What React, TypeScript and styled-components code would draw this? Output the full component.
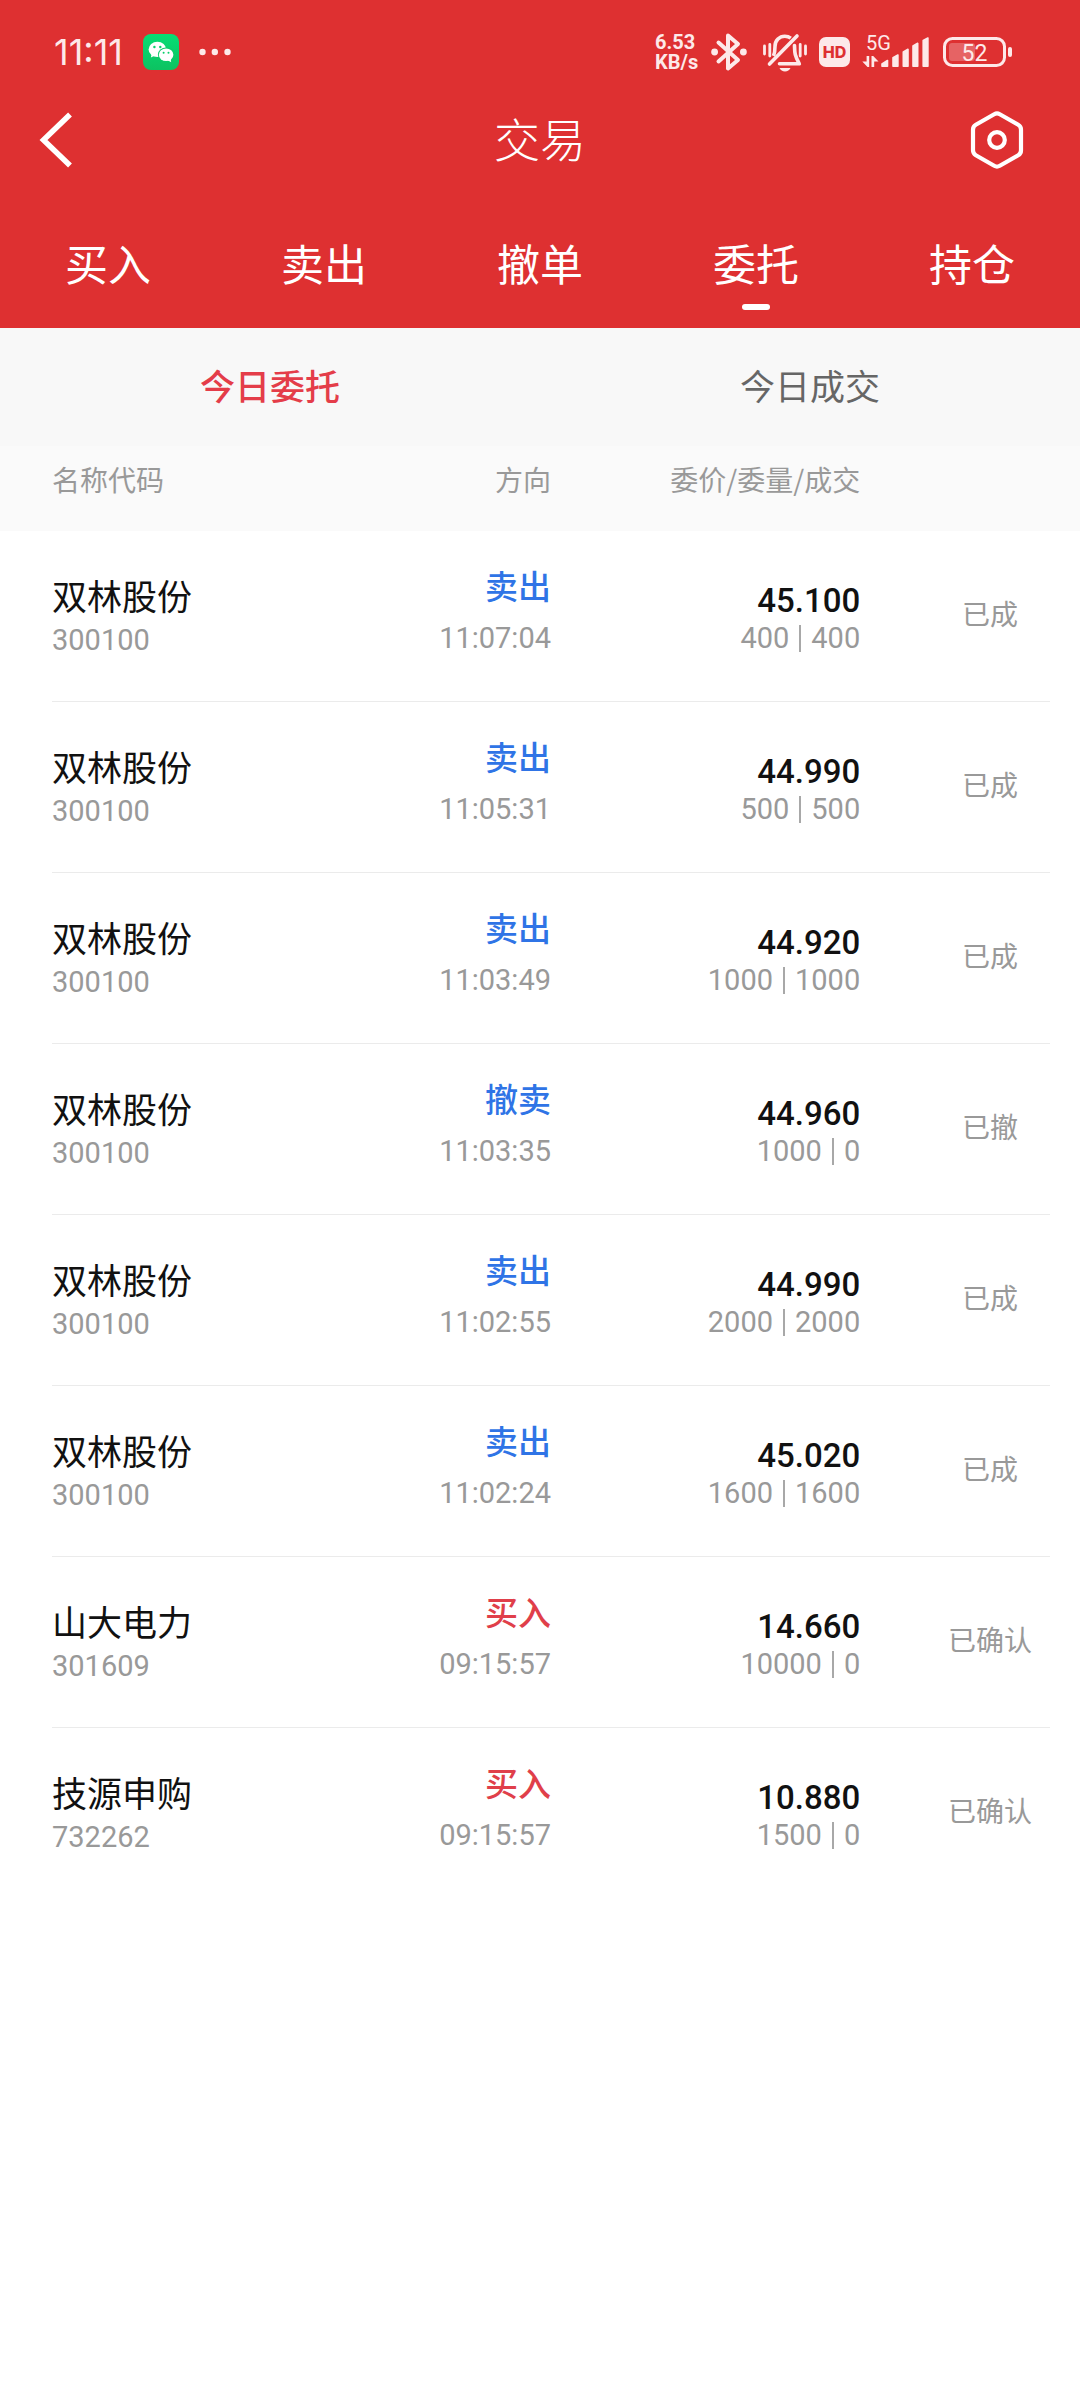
import React, { useState } from 'react';
import styled, { createGlobalStyle } from 'styled-components';

const cjk = '"Noto Sans CJK SC", "Noto Sans", sans-serif';
const digits = 'Roboto, "Noto Sans", sans-serif';
const system = 'Inter, "Noto Sans", sans-serif';

const brand = '#de3031';
const statusInk = '#fde9e9';
const muted = '#999999';

const GlobalStyle = createGlobalStyle`
  *, *::before, *::after { box-sizing: border-box; }
  body { margin: 0; background: #ffffff; font-family: ${cjk}; }
  button { margin: 0; padding: 0; border: 0; background: none; font-family: inherit; cursor: pointer; }
  svg { display: block; flex: none; }
`;

const Header = styled.header`
  background: ${brand};
  color: #ffffff;
`;

const StatusBar = styled.div`
  display: flex;
  align-items: center;
  justify-content: space-between;
  height: 104px;
  padding: 0 68px 0 54px;
  color: ${statusInk};
  font-family: ${system};
`;

const StatusGroup = styled.div<{ $gap: number }>`
  display: flex;
  align-items: center;
  gap: ${(p) => p.$gap}px;
`;

const Clock = styled.time`
  font-size: 36px;
  line-height: 40px;
`;

const NetSpeed = styled.div`
  display: flex;
  flex-direction: column;
  width: 44px;
  font-family: ${digits};
  font-size: 20px;
  font-weight: 700;
  line-height: 20px;
  white-space: nowrap;
`;

const HdBadge = styled.span`
  width: 31px;
  height: 30px;
  border-radius: 7px;
  background: ${statusInk};
  color: ${brand};
  font-size: 16px;
  font-weight: 800;
  line-height: 30px;
  text-align: center;
`;

const NavBar = styled.div`
  display: grid;
  grid-template-columns: 1fr auto 1fr;
  align-items: center;
  height: 72px;
  padding: 0 37px;
`;

const BackButton = styled.button`
  justify-self: start;
`;

const SettingsButton = styled.button`
  justify-self: end;
  padding-right: 18px;
`;

const Title = styled.h1`
  margin: 0;
  padding-bottom: 6px;
  font-size: 46px;
  font-weight: 300;
  line-height: 66px;
`;

const MainTabs = styled.nav`
  display: grid;
  grid-template-columns: repeat(5, 1fr);
  padding: 54px 0 18px;
`;

const MainTab = styled.button<{ $active: boolean }>`
  display: flex;
  flex-direction: column;
  align-items: center;
  gap: 10px;
  color: #ffffff;
  font-size: 43px;
  line-height: 64px;

  &::after {
    content: '';
    width: 28px;
    height: 6px;
    border-radius: 3px;
    background: ${(p) => (p.$active ? '#ffffff' : 'transparent')};
  }
`;

const SubTabs = styled.nav`
  display: grid;
  grid-template-columns: repeat(2, 1fr);
  background: #f8f8f8;
`;

const SubTab = styled.button<{ $active: boolean }>`
  height: 118px;
  padding-bottom: 6px;
  color: ${(p) => (p.$active ? '#e43d49' : '#666666')};
  font-size: 35px;
  font-weight: ${(p) => (p.$active ? 500 : 400)};
`;

const OrderPanel = styled.main`
  padding: 0 30px 0 52px;
`;

const OrderTable = styled.table`
  width: 100%;
  table-layout: fixed;
  border-collapse: separate;
  border-spacing: 0;
  white-space: nowrap;
`;

const HeadCell = styled.th<{ $width: number; $inset?: number; $right?: boolean }>`
  width: ${(p) => p.$width}%;
  height: 85px;
  padding: 0 ${(p) => p.$inset ?? 0}px 20px 0;
  background: #fafafa;
  color: ${muted};
  font-size: 28px;
  font-weight: 400;
  text-align: ${(p) => (p.$right ? 'right' : 'left')};

  &:first-child { box-shadow: -52px 0 #fafafa; }
  &:last-child { box-shadow: 30px 0 #fafafa; }
`;

const OrderRow = styled.tr`
  height: 171px;

  & > td { border-bottom: 1px solid #ebebeb; }
  &:last-child > td { border-bottom-color: transparent; }
`;

const Cell = styled.td<{ $inset?: number; $right?: boolean; $bottom?: number }>`
  padding: 0 ${(p) => p.$inset ?? 0}px ${(p) => p.$bottom ?? 45}px 0;
  vertical-align: bottom;
  text-align: ${(p) => (p.$right ? 'right' : 'left')};
`;

const StatusCell = styled.td`
  padding: 0 0 6px;
  color: ${muted};
  font-size: 28px;
  text-align: center;
`;

const StockName = styled.div`
  padding-bottom: 2px;
  color: #111111;
  font-size: 35px;
  line-height: 50px;
`;

const Side = styled.div<{ $buy: boolean }>`
  padding-bottom: 10px;
  color: ${(p) => (p.$buy ? '#e03f4a' : '#2f74e6')};
  font-size: 33px;
  font-weight: 500;
  line-height: 50px;
`;

const Price = styled.div`
  color: #111111;
  font-family: ${digits};
  font-size: 33px;
  font-weight: 500;
  line-height: 38px;
`;

const Figure = styled.div`
  color: ${muted};
  font-family: ${digits};
  font-size: 29px;
  font-weight: 400;
  line-height: 36px;
`;

const Volumes = styled(Figure)`
  display: flex;
  align-items: center;
  justify-content: flex-end;
  gap: 10px;
`;

const Separator = styled.span`
  width: 2px;
  height: 27px;
  background: #a8a8a8;
`;

const WeChatIcon = () => (
  <svg width="36" height="36" viewBox="0 0 36 36" aria-label="微信">
    <defs>
      <linearGradient id="wechat" x1="0" y1="0" x2="0" y2="1">
        <stop offset="0" stopColor="#06dd74" />
        <stop offset="1" stopColor="#0dc261" />
      </linearGradient>
    </defs>
    <rect width="36" height="36" rx="8" fill="url(#wechat)" />
    <path d="M8.6 20 7.9 23.6 12 21.6Z" fill="#fff" />
    <ellipse cx="14.4" cy="15.4" rx="8.8" ry="7.6" fill="#fff" />
    <circle cx="11.4" cy="13" r="1.2" fill="#08cf6a" />
    <circle cx="17.3" cy="13" r="1.2" fill="#08cf6a" />
    <ellipse cx="23.1" cy="20.7" rx="8.2" ry="7.2" fill="#0acb68" />
    <path d="M24.5 26.2 28.2 28.3 27.6 24.8Z" fill="#fff" />
    <ellipse cx="23.1" cy="20.7" rx="7.3" ry="6.3" fill="#fff" />
    <circle cx="20.6" cy="18.8" r="1" fill="#08cf6a" />
    <circle cx="25.5" cy="18.8" r="1" fill="#08cf6a" />
  </svg>
);

const MoreIcon = () => (
  <svg width="32" height="8" viewBox="0 0 32 8" fill={statusInk} aria-hidden="true">
    <circle cx="3.500" cy="4" r="3.2" />
    <circle cx="15.800" cy="4" r="3.2" />
    <circle cx="28.500" cy="4" r="3.2" />
  </svg>
);

const BluetoothIcon = () => (
  <svg width="40" height="40" viewBox="0 0 40 40" fill="none" aria-label="蓝牙">
    <path
      d="M7.5 10.5 27 28 17 36.5V3.5L27 12 7.5 29.5"
      stroke={statusInk}
      strokeWidth="4"
      strokeLinecap="round"
      strokeLinejoin="round"
    />
    <circle cx="3.6" cy="20" r="3.4" fill={statusInk} />
    <circle cx="32.4" cy="20" r="3.4" fill={statusInk} />
  </svg>
);

const SilentIcon = () => (
  <svg width="44" height="40" viewBox="0 0 44 40" fill="none" stroke={statusInk} aria-label="静音">
    <path d="M1.500 14v8M6.800 12.500v11.500M37.200 12.500v11.500M42.500 14v8" strokeWidth="2.800" strokeLinecap="round" />
    <path d="M10.500 24c1.500-3.500 1.500-6 1.500-9.500C12 8.500 16.500 4.200 21.800 4.200c2.400 0 4.400.7 6 1.900" strokeWidth="3.600" />
    <path d="M31.500 13.500c.2 7.500 0 9.500 4.800 18.300H16.500" strokeWidth="3.600" strokeLinejoin="round" strokeLinecap="round" />
    <path d="M6.500 32 34 4" strokeWidth="3.600" strokeLinecap="round" />
    <path d="M16.500 36h11c-1 2.200-3 3.500-5.500 3.500s-4.500-1.300-5.500-3.500Z" fill={statusInk} stroke="none" />
  </svg>
);

const SignalIcon = () => (
  <svg width="69" height="44" viewBox="0 -2 69 44" fill={statusInk} aria-label="5G">
    <text x="4" y="18" fontFamily={digits} fontSize="20">5G</text>
    <path d="M4.600 24h2.600v11H5.500L.3 29.500h4.300Z" />
    <path d="M9.500 24h1.700l5.300 5.500h-4.300V35H9.500Z" />
    <g stroke={statusInk} strokeWidth="1.600" strokeLinejoin="round">
      <path d="M20 34.200V32l5.500-3.500v5.700Z" />
      <path d="M31 34.200v-8.500l4.900-2.700v11.200Z" />
      <path d="M41.300 34.200V20l4.700-2.700v16.900Z" />
      <path d="M51 34.200V14l4.700-2.700v22.900Z" />
      <path d="M61.200 34.200V8.500l4.700-2.500v28.200Z" />
    </g>
  </svg>
);

const BatteryIcon = () => (
  <svg width="69" height="30" viewBox="0 0 69 30" aria-label="电量 52%">
    <rect x="1.5" y="1.5" width="60" height="27" rx="8" fill="none" stroke={statusInk} strokeWidth="3" />
    <rect x="6" y="6" width="26" height="18" rx="3" fill={statusInk} opacity=".28" />
    <rect x="65" y="10" width="4" height="10" rx="2" fill={statusInk} />
    <text x="31.500" y="23.500" textAnchor="middle" fontFamily={digits} fontSize="23" fill={statusInk}>52</text>
  </svg>
);

const BackIcon = () => (
  <svg width="36" height="58" viewBox="0 0 36 58" fill="none" stroke="#fff" strokeWidth="5.500">
    <path d="M33 3.500 6.500 29 33 54.500" strokeLinejoin="miter" />
  </svg>
);

const SettingsIcon = () => (
  <svg width="56" height="60" viewBox="0 0 56 60" fill="none" stroke="#fff" strokeWidth="4.200">
    <path d="M25.200 4.200a5.600 5.600 0 0 1 5.600 0l18.400 10.600a5.600 5.600 0 0 1 2.800 4.900v20.600a5.600 5.600 0 0 1-2.800 4.900L30.800 55.800a5.600 5.600 0 0 1-5.600 0L6.800 45.200A5.600 5.600 0 0 1 4 40.300V19.700a5.600 5.600 0 0 1 2.800-4.900Z" />
    <circle cx="28" cy="30" r="7.800" />
  </svg>
);

interface Order {
  name: string;
  code: string;
  side: string;
  time: string;
  price: string;
  ordered: number;
  filled: number;
  status: string;
}

const orders: Order[] = [
  { name: '双林股份', code: '300100', side: '卖出', time: '11:07:04', price: '45.100', ordered: 400, filled: 400, status: '已成' },
  { name: '双林股份', code: '300100', side: '卖出', time: '11:05:31', price: '44.990', ordered: 500, filled: 500, status: '已成' },
  { name: '双林股份', code: '300100', side: '卖出', time: '11:03:49', price: '44.920', ordered: 1000, filled: 1000, status: '已成' },
  { name: '双林股份', code: '300100', side: '撤卖', time: '11:03:35', price: '44.960', ordered: 1000, filled: 0, status: '已撤' },
  { name: '双林股份', code: '300100', side: '卖出', time: '11:02:55', price: '44.990', ordered: 2000, filled: 2000, status: '已成' },
  { name: '双林股份', code: '300100', side: '卖出', time: '11:02:24', price: '45.020', ordered: 1600, filled: 1600, status: '已成' },
  { name: '山大电力', code: '301609', side: '买入', time: '09:15:57', price: '14.660', ordered: 10000, filled: 0, status: '已确认' },
  { name: '技源申购', code: '732262', side: '买入', time: '09:15:57', price: '10.880', ordered: 1500, filled: 0, status: '已确认' },
];

const mainTabs = ['买入', '卖出', '撤单', '委托', '持仓'];
const subTabs = ['今日委托', '今日成交'];

export default function App() {
  const [mainTab, setMainTab] = useState('委托');
  const [subTab, setSubTab] = useState('今日委托');

  return (
    <>
      <GlobalStyle />
      <Header>
        <StatusBar>
          <StatusGroup $gap={20}>
            <Clock>11:11</Clock>
            <WeChatIcon />
            <MoreIcon />
          </StatusGroup>
          <StatusGroup $gap={12}>
            <NetSpeed>
              <span>6.53</span>
              <span>KB/s</span>
            </NetSpeed>
            <BluetoothIcon />
            <SilentIcon />
            <HdBadge>HD</HdBadge>
            <SignalIcon />
            <BatteryIcon />
          </StatusGroup>
        </StatusBar>
        <NavBar>
          <BackButton type="button" aria-label="返回">
            <BackIcon />
          </BackButton>
          <Title>交易</Title>
          <SettingsButton type="button" aria-label="设置">
            <SettingsIcon />
          </SettingsButton>
        </NavBar>
        <MainTabs>
          {mainTabs.map((tab) => (
            <MainTab key={tab} type="button" $active={tab === mainTab} onClick={() => setMainTab(tab)}>
              {tab}
            </MainTab>
          ))}
        </MainTabs>
      </Header>
      <SubTabs>
        {subTabs.map((tab) => (
          <SubTab key={tab} type="button" $active={tab === subTab} onClick={() => setSubTab(tab)}>
            {tab}
          </SubTab>
        ))}
      </SubTabs>
      <OrderPanel>
        <OrderTable>
          <thead>
            <tr>
              <HeadCell $width={30}>名称代码</HeadCell>
              <HeadCell $width={20} $right>方向</HeadCell>
              <HeadCell $width={38} $inset={70} $right>委价/委量/成交</HeadCell>
              <HeadCell $width={12} aria-label="状态" />
            </tr>
          </thead>
          <tbody>
            {orders.map((order) => (
              <OrderRow key={order.time + order.code}>
                <Cell $bottom={43}>
                  <StockName>{order.name}</StockName>
                  <Figure>{order.code}</Figure>
                </Cell>
                <Cell $right>
                  <Side $buy={order.side === '买入'}>{order.side}</Side>
                  <Figure>{order.time}</Figure>
                </Cell>
                <Cell $right $inset={70}>
                  <Price>{order.price}</Price>
                  <Volumes>
                    <span>{order.ordered}</span>
                    <Separator />
                    <span>{order.filled}</span>
                  </Volumes>
                </Cell>
                <StatusCell>{order.status}</StatusCell>
              </OrderRow>
            ))}
          </tbody>
        </OrderTable>
      </OrderPanel>
    </>
  );
}
